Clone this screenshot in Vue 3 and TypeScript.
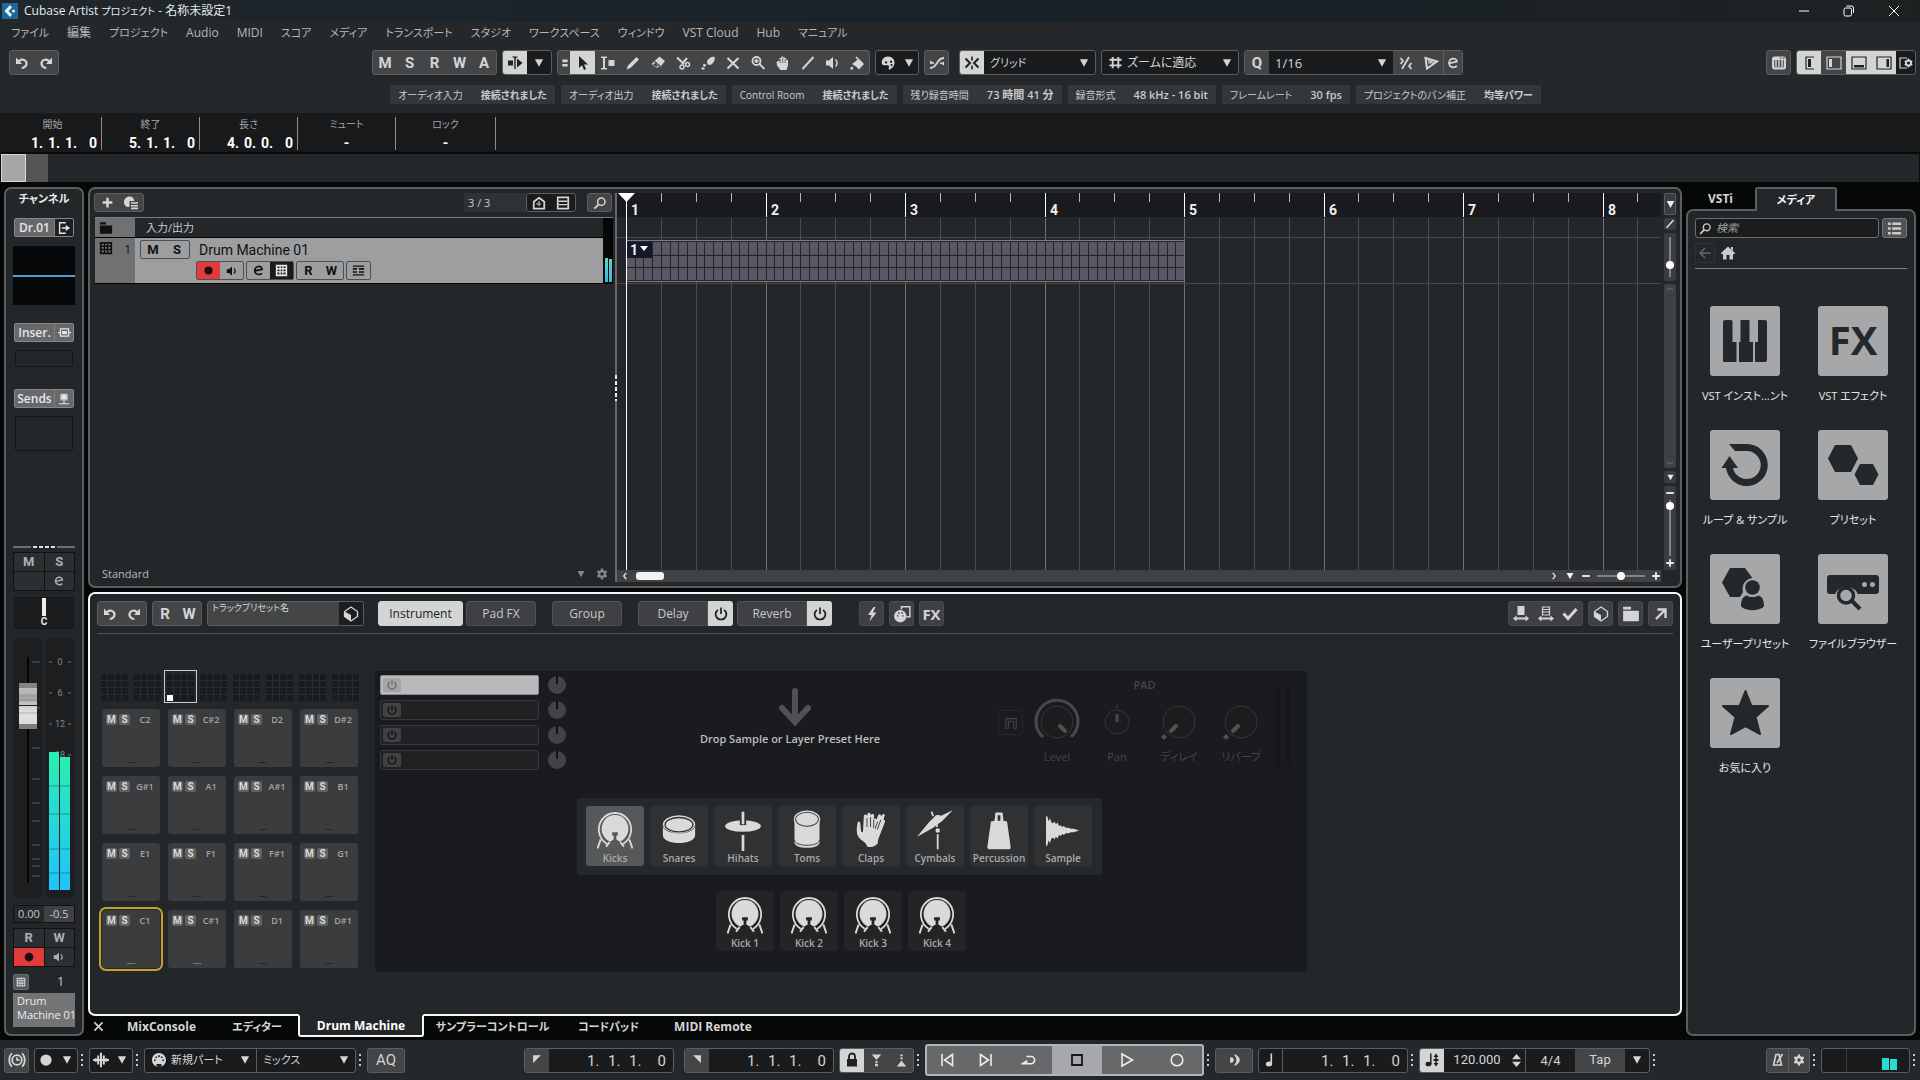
<script setup lang="ts">
import { h, ref } from 'vue'

const glyphs: Record<string, string> = {
  undo: '<path d="M2 2.500v6.500h6L5.900 6.800C7.500 5.400 10 5.600 11 7.300c1 2-.3 4.300-3.300 4.600v2.100c5-.3 7.200-4.700 5.200-8C10.900 2.900 7 2.700 4.400 5z"/>',
  redo: '<path transform="matrix(-1 0 0 1 16 0)" d="M2 2.500v6.500h6L5.900 6.800C7.500 5.400 10 5.600 11 7.300c1 2-.3 4.300-3.300 4.600v2.100c5-.3 7.200-4.700 5.200-8C10.900 2.900 7 2.700 4.400 5z"/>',
  scroll: '<path d="M1 5.500h5v5H1zM7.300 2h1.400v12H7.300zM5 1.500h6L8 4zM10 3.500 15.500 8 10 12.500z"/>',
  down: '<path d="M2.500 3h11L8 13z"/>',
  grip2: '<path d="M5 4h6v3H5zM5 9h6v3H5z"/>',
  arrow: '<path d="M4 1v12l3-2.700L9 15l2-.9-2-4.500h4z"/>',
  range: '<path d="M1 1.500h2.500l.5.500.5-.5H7V3H5v10h2v1.500H4.500L4 14l-.5.500H1V13h2V3H1zM8.500 5h6v6h-6z"/>',
  pencil: '<path d="M1.500 14.500 3 10.500 11.500 2 14 4.500 5.500 13z"/>',
  eraser: '<path d="M9.500 1.500 15 6l-5 6.500H6L1.500 9z"/><path d="m4.500 6.500 5.500 4.500-1.500 2" fill="none" stroke="#434547" stroke-width="1.300"/><path d="M3 9.500 5 8l3 2.500-2 1.500z" fill="#434547"/>',
  scissors: '<path d="M2 2.500 9 9M12 3l-5 6" fill="none" stroke="currentColor" stroke-width="2"/><circle cx="7" cy="12" r="2" fill="none" stroke="currentColor" stroke-width="1.500"/><circle cx="12.500" cy="9.500" r="2" fill="none" stroke="currentColor" stroke-width="1.500"/>',
  glue: '<path d="M7 6c2-3 5-5 7.500-4 1 3-1 6.500-4 8L7.500 9.500zM3.500 8.500 6.500 10 4.500 12 3 11zM1.500 12.500h3v2h-3z"/>',
  cross: '<path d="m2.500 3 11 10.500M13.500 3l-11 10.500" fill="none" stroke="currentColor" stroke-width="2.200"/>',
  zoom: '<circle cx="6.500" cy="6" r="4" fill="none" stroke="currentColor" stroke-width="1.800"/><path d="m9.500 9 5 5M4.500 6h4M6.500 4v4" fill="none" stroke="currentColor" stroke-width="1.800"/>',
  hand: '<path d="M3 6h1.600V3h1.600V1.500h1.700v.8h1.700V3h1.700v2H13v5.500L11.500 15h-6L2 10.500 1.500 7z"/><path d="M5.300 4v4M7.700 3v5M10.200 4v4" stroke="#434547" stroke-width=".7"/>',
  line: '<path d="M2.500 14 13.500 2" stroke="currentColor" stroke-width="2"/>',
  speaker: '<path d="M1 5.500h3L8 2v12l-4-3.500H1z"/><path d="M10.500 4.500c2 2 2 5 0 7" fill="none" stroke="currentColor" stroke-width="1.600"/>',
  bucket: '<path d="M3 9 9.500 4l5.500 5-5 5.500-3-3zM1.500 12h2.500v2.500H1.500z"/><path d="m7 2 6 6" stroke="currentColor" stroke-width="1.600"/>',
  palette: '<path fill-rule="evenodd" d="M8 1.500c4 0 6.800 3 6.500 6.500-.2 3-2.500 5.800-5 6.500-1 .3-1-1-.5-2.500.4-1.500-1-2-2.500-1.800C4 10.500 2 10.500 1.800 8 1.500 4.500 4 1.500 8 1.500zM6 6.200a1.200 1.200 0 1 0 .1 0zM11 5.500a1.200 1.200 0 1 0 .1 0zM11.500 9a1 1 0 1 0 .1 0z"/>',
  curve: '<path d="M1 13c8 0 6-10 14-10M1 7l4 1.500M15 9l-4-1" fill="none" stroke="currentColor" stroke-width="1.800"/><path d="M1 5.500v4l3-2zM15 6.500v4l-3-2z"/>',
  snap: '<path d="M7.200 1.500h1.600v4H7.200zM7.200 10.500h1.600v4H7.200z"/><path d="M1.500 3.500 6 8l-4.500 4.500M14.500 3.500 10 8l4.500 4.500" fill="none" stroke="currentColor" stroke-width="2"/>',
  hash: '<path d="M5 2v12M11 2v12M1.500 5h13M1.500 11h13" stroke="currentColor" stroke-width="2"/>',
  iq: '<path d="M4 14 11 2M2.500 3l2.500 3-2.500 3M13.500 8 11 11l2.500 3" fill="none" stroke="currentColor" stroke-width="1.800"/>',
  aq: '<path d="M2.500 3 14 6.500 4 13.500z" fill="none" stroke="currentColor" stroke-width="2"/><path d="M4.500 5h1.500v3h1.500V6H9v2h2" fill="none" stroke="currentColor" stroke-width="1.200"/>',
  edit: '<path d="M3.500 8.500 12.500 6.500C12 3.500 9.500 2.500 7.500 3 4.500 3.500 3 6.500 3.500 9c.7 4 5.500 5 9 2.500" fill="none" stroke="currentColor" stroke-width="2"/>',
  keysbtn: '<rect x="1" y="1.500" width="14" height="13" rx="2.500"/><path d="M3.200 5h9.600v7.500H3.200z" fill="#434547"/><path d="M5 5v6M8 5v6M11 5v6" stroke="currentColor" stroke-width="1.500"/><path d="M3.200 12h9.600" stroke="currentColor" stroke-width="1.200"/><path d="M9 3.200h1.500M12 3.200h1.500" stroke="#434547" stroke-width="1.200"/>',
  zl: '<path d="M13 2H5v12h8" fill="none" stroke="currentColor" stroke-width="1.200"/><path d="M7 4h3v8H7z"/>',
  zi: '<path d="M1 2h14v12H1z" fill="none" stroke="currentColor" stroke-width="1.200"/><path d="M3 4h3v8H3z"/>',
  zb: '<path d="M1 2h14v12H1z" fill="none" stroke="currentColor" stroke-width="1.200"/><path d="M3 10h10v2.500H3z"/>',
  zr: '<path d="M1 2h14v12H1z" fill="none" stroke="currentColor" stroke-width="1.200"/><path d="M10.500 4h2.500v8h-2.500z"/>',
  zset: '<path d="M9 3H2v10h7" fill="none" stroke="currentColor" stroke-width="1.200"/><circle cx="10.500" cy="8" r="2.600" fill="none" stroke="currentColor" stroke-width="2"/><path d="M10.500 3.500v2M10.500 10.500v2M6.700 6l1.500 1M12.800 9l1.500 1M6.700 10l1.500-1M12.800 7l1.500-1" stroke="currentColor" stroke-width="1.500"/>',
  gear: '<circle cx="8" cy="8" r="3.800" fill="none" stroke="currentColor" stroke-width="3"/><path d="M8 .8v3M8 12.200v3M1.800 4.400l2.600 1.500M11.600 10.100l2.600 1.500M1.800 11.600l2.600-1.500M11.600 5.900l2.600-1.500" stroke="currentColor" stroke-width="3"/>',
  plus: '<path d="M8 2v12M2 8h12" stroke="currentColor" stroke-width="3"/>',
  minus: '<path d="M2 8h12" stroke="currentColor" stroke-width="3"/>',
  preset: '<path d="M6.500 1.500c3 0 4.500 2 4.900 4.500H6.500v6C3 12.500 1 10 1 7s2.500-5.500 5.500-5.500z"/><path d="M8 8h7M8 10.700h7M8 13.400h7" stroke="currentColor" stroke-width="1.600"/>',
  vis: '<path d="M8 2 14 6.500v8H2v-8z" fill="none" stroke="currentColor" stroke-width="2"/><path d="M8 6v6M5 9h6" stroke="currentColor" stroke-width="1.500" stroke-dasharray="2 1"/>',
  rows: '<path d="M2 1.500h12v13H2z" fill="none" stroke="currentColor" stroke-width="2"/><path d="M3 6h10M3 9.800h10" stroke="currentColor" stroke-width="1.500"/>',
  search: '<circle cx="9.500" cy="6.500" r="4.200" fill="none" stroke="currentColor" stroke-width="1.700"/><path d="m6.500 9.500-5 5" stroke="currentColor" stroke-width="2.200"/>',
  folder: '<path d="M1 1.500h7V4H1zM1 5h14v9.500H1z"/>',
  grid: '<path fill-rule="evenodd" d="M1 1h14v14H1zM3 3v2h2.500V3zm4 0v2h2V3zm3.500 0v2H13V3zM3 6.800v2h2.500v-2zm4 0v2h2v-2zm3.500 0v2H13v-2zM3 10.600V13h2.500v-2.400zm4 0V13h2v-2.400zm3.500 0V13H13v-2.400z"/>',
  rec: '<circle cx="8" cy="8" r="5"/>',
  lanes: '<path d="M1 2.500h14M1 13.500h14" stroke="currentColor" stroke-width="1.500"/><path d="M1 6h5M8.500 6H15M1 9.800h5M8.500 9.800H15" stroke="currentColor" stroke-width="2"/>',
  out: '<path d="M10 2H3v12h7" fill="none" stroke="currentColor" stroke-width="1.500"/><path d="M5.500 7.200H10V4.500L15 8l-5 3.500V8.800H5.500z"/>',
  insert: '<path d="M3 3.500h10v9H3z" fill="none" stroke="currentColor" stroke-width="1.500"/><path d="M5 6h6v4H5zM0 7.300h3v1.500H0zM13 7.300h3v1.500h-3z"/>',
  send: '<path d="M3 1h10v9H3z" opacity=".7"/><path d="M5 3h6v5H5zM7.300 10h1.400v4H7.300zM1 13.500h14V15H1z"/>',
  box: '<path d="M8 1 14.500 5.500v5L8 15 1.500 10.500v-5z" fill="none" stroke="currentColor" stroke-width="1.300"/><path d="M1.500 5.500 8 9v6l-6.500-4.500z"/>',
  power: '<path d="M5 4C.5 7 3 13.500 8 13.500S15.500 7 11 4M8 1.500V8" fill="none" stroke="currentColor" stroke-width="1.700"/>',
  bolt: '<path d="M9.500 1 4 9h3.500L5.500 15.500 12.500 6.500H8.800L11.500 1z"/>',
  midi: '<path d="M7.500 4V1.500h7.500v9h-3" fill="none" stroke="currentColor" stroke-width="1.300"/><path fill-rule="evenodd" d="M6.500 4.500a5.500 5.500 0 1 1-.1 0zM3.500 9v1.300h1.300V9zm4.600 0v1.300h1.300V9zM4.500 6.500v1.300h1.300V6.500zm3 0v1.300h1.300V6.500z"/>',
  din: '<path fill-rule="evenodd" d="M8 1a7 7 0 1 1-.1 0zM3 7.500V9h1.600V7.500zm8.400 0V9H13V7.500zM4.500 4.500v1.600h1.600V4.500zm5.400 0v1.600h1.600V4.500zM7.200 3.300v1.600h1.600V3.300zM5.500 12v3h5v-3z"/>',
  dsolid: '<path d="M4.500 0h7v9h-7zM0 12.500 3.500 9.500v2h9v-2L16 12.500l-3.500 3v-2h-9v2z"/>',
  dlines: '<path d="M4.500 1h7v8h-7zM5 3.500h6M5 6h6" fill="none" stroke="currentColor" stroke-width="1.200"/><path d="M0 12.500 3.500 9.500v2h9v-2L16 12.500l-3.500 3v-2h-9v2z"/>',
  check: '<path d="m1.500 7.500 4.500 5 8.500-9.500" fill="none" stroke="currentColor" stroke-width="3"/>',
  ne: '<path d="M4.500 3.500h8v8.500M12 4l-9 9" fill="none" stroke="currentColor" stroke-width="2.400"/>',
  close: '<path d="m3 3 10 10M13 3 3 13" stroke="currentColor" stroke-width="2"/>',
  home: '<path d="M8 1.500 15 8v1h-2v5.500H9.500V10h-3v4.500H3V9H1V8z"/><path d="M11 2h2v4l-2-2z"/>',
  back: '<path d="M14.500 8H3M8 2.500 2.500 8 8 13.500" fill="none" stroke="currentColor" stroke-width="2"/>',
  list: '<path d="M1 3h3M1 8h3M1 13h3M5.500 3H15M5.500 8H15M5.500 13H15" stroke="currentColor" stroke-width="2.600"/>',
  clock: '<circle cx="8" cy="8" r="4.300" fill="none" stroke="currentColor" stroke-width="1.600"/><path d="M8 5.500V8h2.500M3.500 2C.3 5 .3 11 3.500 14M12.500 2c3.200 3 3.200 9 0 12" fill="none" stroke="currentColor" stroke-width="1.500"/>',
  wave: '<path d="M1 8h14M3.300 6.500v3M5.500 4v8M8 1.500v13M10.500 4v8M12.700 6.500v3" stroke="currentColor" stroke-width="1.800"/>',
  locl: '<path d="M3.500 2.500h9l-9 9z"/>',
  locr: '<path d="M12.500 2.500h-9l9 9z"/>',
  lock: '<path d="M5 7V4.500a3 3 0 0 1 6 0V7" fill="none" stroke="currentColor" stroke-width="1.800"/><path d="M3 7h10v7.500H3z"/>',
  punchi: '<path d="M3 1.500h10L8 7.500zM6.800 8.500h2.400v2H6.800zM6.500 11.500h3v2.500h-3z"/>',
  puncho: '<path d="M3 14.500h10L8 8zM6.800 1.500h2.400v2H6.800zM6.800 4.700h2.400v2H6.800z"/>',
  prev: '<path d="M3 2v12M13.500 2.500 5.500 8l8 5.500z" fill="none" stroke="currentColor" stroke-width="1.600"/>',
  next: '<path d="M13 2v12M2.500 2.500l8 5.500-8 5.500z" fill="none" stroke="currentColor" stroke-width="1.600"/>',
  cycle: '<path d="M5.500 4.500H10a3.600 3.600 0 0 1 0 7.200H1.500l4-2.500v2.500" fill="none" stroke="currentColor" stroke-width="1.600"/>',
  stop: '<path d="M3 3h10v10H3z" fill="none" stroke="currentColor" stroke-width="1.800"/>',
  play: '<path d="M3 2 13.500 8 3 14z" fill="none" stroke="currentColor" stroke-width="1.600"/>',
  record: '<circle cx="8" cy="8" r="5.800" fill="none" stroke="currentColor" stroke-width="1.600"/>',
  preroll: '<path d="M3.500 5a3.200 3.200 0 1 1 0 6z"/><path d="M8.500 2c7.500 1.500 7.500 10.500 0 12 3.500-3 3.500-9 0-12z" stroke="currentColor"/>',
  note: '<ellipse cx="6" cy="12" rx="3.200" ry="2.500"/><path d="M8.300 1.500v10.500" stroke="currentColor" stroke-width="1.600"/>',
  tempo: '<ellipse cx="4.500" cy="12" rx="3" ry="2.300"/><path d="M6.800 1.500v10.500M12 3v10" stroke="currentColor" stroke-width="1.500"/><path d="M9.500 5 12 1.500 14.500 5zM9.500 11l2.500 3.500 2.500-3.500zM9.500 7h5v2h-5z"/>',
  metro: '<path d="M6 2.500h3L11.500 13h-8z" fill="none" stroke="currentColor" stroke-width="1.600"/><path d="m7 11 5.500-9" stroke="currentColor" stroke-width="1.600"/>',
  up: '<path d="M8 0 13.500 6.500h-11zM2.500 9.500h11L8 16z"/>',
  ramp: '<path d="M2 14V3h12v11h-3V6H5v8z" fill="none" stroke="currentColor" stroke-width="1.200"/>',
  chevl: '<path d="M10 3 6 8l4 5" fill="none" stroke="currentColor" stroke-width="2"/>',
  chevr: '<path d="m6 3 4 5-4 5" fill="none" stroke="currentColor" stroke-width="2"/>',
  chevu: '<path d="m3 10 5-4 5 4" fill="none" stroke="currentColor" stroke-width="1.500"/>',
  chevd: '<path d="m3 6 5 4 5-4" fill="none" stroke="currentColor" stroke-width="1.500"/>',
}

const kick =
  '<path d="M11 39A18 18.500 0 1 1 29 39" fill="none" stroke="currentColor" stroke-width="2"/><path d="M14.500 36.500A15 15.500 0 1 1 25.500 36.500L21.500 34v-4.500h1.700V26h-6.400v3.500h1.700V34z"/><path d="m4 34-3.500 10M36 34l3.500 10M14 37l-4 5M26 37l4 5" stroke="currentColor" stroke-width="2.200"/>'

const drums: Record<string, string> = {
  kick,
  snare: '<path d="M2 18v11c0 12 36 12 36 0V18c0 12-36 12-36 0z"/><ellipse cx="20" cy="17" rx="18" ry="10"/><ellipse cx="20" cy="17.500" rx="15.500" ry="8" fill="#d9dadb" stroke="#2f3133" stroke-width="1.500"/>',
  hihat: '<ellipse cx="20" cy="19" rx="20" ry="6.500"/><path d="M16.500 12h7v6h-7z" fill="#2f3133"/><path d="M18.500 3h3v14h-3zM18.500 29h3v18h-3z"/>',
  tom: '<path d="M6 13v24c0 8.500 28 8.500 28 0V13z"/><ellipse cx="20" cy="11.500" rx="13" ry="8" fill="#d9dadb" stroke="#2f3133" stroke-width="1.500"/><ellipse cx="20" cy="11.500" rx="14" ry="9" fill="none" stroke="currentColor" stroke-width="1.500"/><path d="M6 34.500c0 8 28 8 28 0" fill="none" stroke="#2f3133"/>',
  clap: '<path d="M5 15c1-2 3-1 3 1l1 9 2 1 1-18c0-2.500 3.500-2.500 3.500 0L16 6c0-2.500 3.500-2.500 3.500 0l.5 1c.500-2 3.500-2 3.500.5l-.5 4c1-1.500 3-1 3 .5l2-5c1-2 3.500-1 3 1l2-2c2-1 3 0 2 2l-1 4c1.500 0 2 1 1.500 2.500l-5 13c-1 3-3 6-3 11-4 4-8 5-12 3-1-6-9-6-11-14-1-5 0-9 .5-12z"/><path d="M15.500 10v10M19.500 9v11M23 12v9M27.500 14l-3 8M31 12l-4 11" stroke="#2f3133"/>',
  cymbal: '<path d="M0 31 13 15l7-7c2-2 5-1 7-.5L40 1 28 13.500 18 21z"/><path d="M22 14v6M16 3l2 5" stroke="currentColor" stroke-width="2"/><circle cx="23" cy="24" r="2.500"/><path d="M22 28h2v17h-2z"/>',
  bell: '<path fill-rule="evenodd" d="M16 4h8l1 9 4 1 4 28c0 2-1 3-2 3H9c-1 0-2-1-2-3l4-28 4-1zm2.500 3v6h3V7z"/>',
  sample: '<path d="M1 8h1.500l1.500 6 1.500-4 1.500 5 2 1 1.500-2 1.500 3 2-2 1.500 4 2-1 1.500 2 2-1 2 2 3 0 3 1 3 0 6 2-6 2-3 0-3 1-3 0-2 2-2-1-1.500 2-2-1-1.500 4-2-2-1.500 3-1.500-2-2 1-1.500 5-1.500-3-1.500 6H1z"/>',
}

const tiles: Record<string, string> = {
  keys: '<path d="M15 14h6q1.500 0 1.500 1.500V36h4v19q0 1-1 1H14q-1 0-1-1V16q0-2 2-2zM31.500 14h7q1 0 1 1v21H43v20H29V36h1.500V15q0-1 1-1zM49 14h6q2 0 2 2v38q0 2-2 2H46q-1 0-1-1V36h3V15q0-1 1-1z"/>',
  loop: '<path d="M19 14h18a21 21 0 1 1-21 24h-4.500L19.500 26 28 38h-5A14 14 0 1 0 37 21H25z"/>',
  preset: '<path d="M17 15h16l7 13.500L33 42H17l-7-13.500zM42 34h13l5.500 10.500L55 55H42l-5.500-10.500z"/>',
  user: '<path d="M20 14h15l7.500 10A11 11 0 0 0 33 38l-3 5H20L12 28.500z"/><circle cx="42.500" cy="33.500" r="7.300"/><path d="M37 41.500c3 2 8 2 11 0 5 1 6 6 6 11-6 5-17 5-23 0 0-5 1-10 6-11z"/>',
  files: '<path d="M12 21h46q3 0 3 3v13q0 3-3 3H40A13 13 0 0 0 17 40h-5q-3 0-3-3V24q0-3 3-3z"/><circle cx="46.500" cy="30.500" r="2.500" fill="#a6a7a8"/><circle cx="54.500" cy="30.500" r="2.500" fill="#a6a7a8"/><circle cx="28" cy="41.500" r="7.500" fill="none" stroke="currentColor" stroke-width="3.500"/><path d="m33.500 46.500 8.500 8.500" stroke="currentColor" stroke-width="4"/>',
  star: '<path d="m35.500 13 6 15H58l-12.500 11L50 56l-14.500-8L21 56l4.500-17L13 28h16.500z" stroke="currentColor" stroke-width="2" stroke-linejoin="round"/>',
}

const Ic = (p: { n: string; s?: number }) =>
  h('svg', { class: 'ic', viewBox: '0 0 16 16', width: p.s ?? 16, height: p.s ?? 16, fill: 'currentColor', 'aria-hidden': 'true', innerHTML: glyphs[p.n] })
Ic.props = ['n', 's']

const isJa = (t: string) => /[\u3040-\u30ff]/.test(t)

const menus = ['ファイル', '編集', 'プロジェクト', 'Audio', 'MIDI', 'スコア', 'メディア', 'トランスポート', 'スタジオ', 'ワークスペース', 'ウィンドウ', 'VST Cloud', 'Hub', 'マニュアル']
const tools = ['arrow', 'range', 'pencil', 'eraser', 'scissors', 'glue', 'cross', 'zoom', 'hand', 'line', 'speaker', 'bucket']
const status = [
  ['オーディオ入力', '接続されました'], ['オーディオ出力', '接続されました'], ['Control Room', '接続されました'],
  ['残り録音時間', '73 時間 41 分'], ['録音形式', '48 kHz - 16 bit'], ['フレームレート', '30 fps'], ['プロジェクトのパン補正', '均等パワー'],
]
const info: { label: string; pos?: string[] }[] = [
  { label: '開始', pos: ['1.', '1.', '1.', '0'] }, { label: '終了', pos: ['5.', '1.', '1.', '0'] },
  { label: '長さ', pos: ['4.', '0.', '0.', '0'] }, { label: 'ミュート' }, { label: 'ロック' },
]
const zero = ['1.', '1.', '1.', '0']

const BAR = 139.5
const ORIGIN = 9
const bars = Array.from({ length: 8 }, (_, i) => ({ n: i + 1, x: Math.round(ORIGIN + i * BAR) }))
const beats = Array.from({ length: 31 }, (_, i) => i).filter((i) => i % 4).map((i) => Math.round(ORIGIN + (i * BAR) / 4))
const steps = Array.from({ length: 63 }, (_, i) => Math.round(ORIGIN + ((i + 1) * BAR) / 16))

const pads = ['C2', 'C#2', 'D2', 'D#2', 'G#1', 'A1', 'A#1', 'B1', 'E1', 'F1', 'F#1', 'G1', 'C1', 'C#1', 'D1', 'D#1']
const selectedPad = ref('C1')
const cats = [['kick', 'Kicks'], ['snare', 'Snares'], ['hihat', 'Hihats'], ['tom', 'Toms'], ['clap', 'Claps'], ['cymbal', 'Cymbals'], ['bell', 'Percussion'], ['sample', 'Sample']]
const kicks = ['Kick 1', 'Kick 2', 'Kick 3', 'Kick 4']
const category = ref('Kicks')
const media = [['keys', 'VST インスト...ント'], ['fx', 'VST エフェクト'], ['loop', 'ループ & サンプル'], ['preset', 'プリセット'], ['user', 'ユーザープリセット'], ['files', 'ファイルブラウザー'], ['star', 'お気に入り']]
const lowerTabs = ['MixConsole', 'エディター', 'Drum Machine', 'サンプラーコントロール', 'コードパッド', 'MIDI Remote']
const faderTicks = [24, 70, 110, 141, 165, 183, 207, 221, 228, 238]
const meterMarks = [[24, '0'], [55, '6'], [86, '12'], [117, '18']] as [number, string][]
</script>

<template>
  <div class="app">
    <header class="top">
      <div class="title">
        <svg class="logo" viewBox="0 0 16 16" width="16" height="16"><path d="M0 0h16v16H0z" fill="#1c6a9c" /><path d="M8 2 2.500 8 8 14l2-2.500L6.500 8 10 4.500z" fill="#e8f4fb" /><circle cx="11.500" cy="8" r="1.500" fill="#e8f4fb" /></svg>
        <h1>Cubase Artist <span class="k10">プロジェクト</span> - 名称未設定1</h1>
        <div class="winbtns">
          <button aria-label="最小化"><svg viewBox="0 0 12 12" width="12" height="12"><path d="M1 6h10" stroke="#fff" /></svg></button>
          <button aria-label="元に戻す"><svg viewBox="0 0 12 12" width="12" height="12" fill="none" stroke="#fff"><rect x="1" y="3" width="7.500" height="8" rx="1.500" /><path d="M3.500 1h5q2 0 2 2v5" /></svg></button>
          <button aria-label="閉じる"><svg viewBox="0 0 12 12" width="12" height="12"><path d="m1 1 10 10M11 1 1 11" stroke="#fff" /></svg></button>
        </div>
      </div>
      <nav class="menu"><button v-for="m in menus" :key="m" :class="{ k11: isJa(m) }">{{ m }}</button></nav>

      <div class="toolbar">
        <div class="grp"><button class="b" aria-label="Undo"><Ic n="undo" /></button><button class="b" aria-label="Redo"><Ic n="redo" /></button></div>
        <div class="tools">
          <div class="grp ltr"><button v-for="l in 'MSRWA'" :key="l" class="b">{{ l }}</button></div>
          <div class="grp dark"><button class="b on" aria-label="オートスクロール"><Ic n="scroll" /></button><button class="b" aria-label="オートスクロール設定"><Ic n="down" s="12" /></button></div>
          <div class="grp">
            <span class="handle"><Ic n="grip2" s="14" /></span>
            <button v-for="(t, i) in tools" :key="t" class="b" :class="{ on: i === 0 }" :aria-label="t"><Ic :n="t" /></button>
          </div>
          <div class="grp dark"><button class="b" aria-label="カラー"><Ic n="palette" /></button><button class="b slim" aria-label="カラーメニュー"><Ic n="down" s="12" /></button></div>
          <div class="grp"><button class="b" aria-label="クロスフェード"><Ic n="curve" /></button></div>
          <div class="grp dark apart">
            <button class="b on" aria-label="スナップ"><Ic n="snap" /></button>
            <label class="sel w110"><select class="k11" aria-label="スナップタイプ"><option>グリッド</option></select><Ic n="down" s="12" /></label>
          </div>
          <div class="grp dark">
            <label class="sel w136"><Ic n="hash" s="15" /><select aria-label="グリッドの間隔"><option>ズームに適応</option></select><Ic n="down" s="12" /></label>
          </div>
          <div class="grp dark">
            <span class="b mid qletter">Q</span>
            <label class="sel w124"><select class="k13" aria-label="クオンタイズ"><option>1/16</option></select><Ic n="down" s="12" /></label>
            <button class="b mid" aria-label="反復クオンタイズ"><Ic n="iq" /></button><button class="b mid" aria-label="オーディオクオンタイズ"><Ic n="aq" /></button>
            <button class="b mid slim2" aria-label="クオンタイズパネル"><Ic n="edit" s="14" /></button>
          </div>
        </div>
        <div class="zones">
          <div class="grp"><button class="b" aria-label="オンスクリーンキーボード"><Ic n="keysbtn" /></button></div>
          <div class="grp dark">
            <button class="b on" aria-label="左ゾーン"><Ic n="zl" /></button><button class="b mid" aria-label="インスペクター"><Ic n="zi" /></button>
            <button class="b on" aria-label="下ゾーン"><Ic n="zb" /></button><button class="b on" aria-label="右ゾーン"><Ic n="zr" /></button>
            <button class="b slim2" aria-label="ゾーン設定"><Ic n="zset" /></button>
          </div>
        </div>
      </div>

      <dl class="status">
        <div v-for="s in status" :key="s[0]"><dt>{{ s[0] }}</dt><dd :class="{ k10: isJa(s[1]) }">{{ s[1] }}</dd></div>
      </dl>
    </header>

    <section class="info">
      <div v-for="c in info" :key="c.label" class="icol">
        <span>{{ c.label }}</span>
        <b v-if="c.pos" class="pos small"><i v-for="(p, i) in c.pos" :key="i">{{ p }}</i></b>
        <b v-else>-</b>
      </div>
    </section>
    <div class="overview"><i class="view"></i><i class="rest"></i></div>

    <main class="main">
      <aside class="panel channel">
        <h2>チャンネル</h2>
        <div class="chrow first"><button class="name">Dr.01</button><button class="sq line" aria-label="出力"><Ic n="out" s="14" /></button></div>
        <div class="eq"></div>
        <div class="chrow mt18"><button class="name">Inser.</button><button class="sq" aria-label="Inserts"><Ic n="insert" s="13" /></button></div>
        <div class="slot s1"></div>
        <div class="chrow mt22"><button class="name">Sends</button><button class="sq" aria-label="Sends bypass"><Ic n="send" s="12" /></button></div>
        <div class="slot s2"></div>
        <div class="split"></div>
        <div class="four"><button>M</button><button>S</button><button aria-label="Listen"></button><button aria-label="Edit"><Ic n="edit" s="12" /></button></div>
        <div class="pan"><i></i><span>C</span></div>
        <div class="fader">
          <div class="fcol">
            <svg width="28" height="260" aria-hidden="true"><path d="M14 19v226" stroke="#050505" stroke-width="2" /><path v-for="t in faderTicks" :key="t" :d="`M18 ${t}h8`" stroke="#5d5f60" /></svg>
            <input type="range" min="0" max="100" value="79" aria-label="Level" />
          </div>
          <svg class="meter" width="28" height="260" aria-hidden="true">
            <defs><linearGradient id="mg" x1="0" y1="0" x2="0" y2="1"><stop offset="0" stop-color="#2bedb3" /><stop offset="1" stop-color="#1ec3fb" /></linearGradient></defs>
            <g v-for="m in meterMarks" :key="m[0]"><text x="14" :y="m[0] + 3" text-anchor="middle">{{ m[1] }}</text><path :d="`M3 ${m[0]}h3M22 ${m[0]}h3`" stroke="#777" /></g>
            <rect x="3" y="114" width="10" height="138" fill="url(#mg)" /><rect x="14" y="119" width="10" height="133" fill="url(#mg)" />
            <path d="M3 148h21M3 176h21M3 211h21M3 235h21" stroke="#12696f" stroke-opacity=".6" />
          </svg>
        </div>
        <div class="vals"><span>0.00</span><span class="lit">-0.5</span></div>
        <div class="four"><button>R</button><button>W</button><button class="red" aria-label="録音"><Ic n="rec" s="14" /></button><button aria-label="モニター"><Ic n="speaker" s="12" /></button></div>
        <div class="trk"><span class="tico"><Ic n="grid" s="10" /></span><span>1</span></div>
        <div class="tname">Drum<br />Machine 01</div>
      </aside>

      <div class="center">
        <section class="panel project">
          <div class="tracks">
            <div class="thead">
              <div class="grp h19"><button class="b" aria-label="トラックを追加"><Ic n="plus" s="13" /></button><button class="b" aria-label="トラックプリセット"><Ic n="preset" /></button></div>
              <span class="count">3 / 3</span>
              <div class="grp h19 dark"><button class="b" aria-label="表示"><Ic n="vis" s="14" /></button><button class="b" aria-label="リスト"><Ic n="rows" s="14" /></button></div>
              <div class="grp h19 find"><button class="b" aria-label="検索"><Ic n="search" s="14" /></button></div>
            </div>
            <div class="tlist">
              <div class="rows">
                <div class="row io"><div class="hd"><Ic n="folder" s="14" /></div><div class="bd">入力/出力</div></div>
                <div class="row drum">
                  <div class="hd"><Ic n="grid" s="14" /><span>1</span></div>
                  <div class="bd">
                    <div class="l1"><div class="tg"><button>M</button><button>S</button></div><span>Drum Machine 01</span></div>
                    <div class="l2">
                      <div class="tg"><button class="red" aria-label="録音可能"><Ic n="rec" s="13" /></button><button aria-label="モニター"><Ic n="speaker" s="12" /></button></div>
                      <div class="tg"><button aria-label="編集"><Ic n="edit" s="13" /></button><button class="blk" aria-label="Drum Machine"><Ic n="grid" s="13" /></button></div>
                      <div class="tg"><button>R</button><button>W</button></div>
                      <div class="tg"><button aria-label="レーン"><Ic n="lanes" s="13" /></button></div>
                    </div>
                  </div>
                </div>
              </div>
              <div class="tmeter"><i></i><i></i></div>
            </div>
            <div class="tfoot"><span>Standard</span><Ic n="down" s="10" /><Ic n="gear" s="12" /></div>
          </div>
          <div class="vsplit"><i></i></div>
          <div class="timeline">
            <svg class="arr" aria-label="タイムライン">
              <rect x="0" y="0" width="100%" height="24" fill="#1a1b1e" />
              <path v-for="x in beats" :key="x" :d="`M${x + 0.5} 25V800`" stroke="#4b4e50" />
              <path v-for="b in bars" :key="b.n" :d="`M${b.x + 0.5} 25V800`" stroke="#717375" />
              <path v-for="x in beats" :key="'t' + x" :d="`M${x + 0.5} 0v9`" stroke="#b5b6b7" />
              <g v-for="b in bars" :key="'b' + b.n"><path :d="`M${b.x + 0.5} 0v24`" stroke="#fff" /><text :x="b.x + 5" y="22">{{ b.n }}</text></g>
              <path d="M0 44.500H1048M0 90.500H1048" stroke="#47494b" />
              <rect x="0" y="46" width="9" height="42" fill="#25242c" />
              <rect x="10" y="47" width="557" height="42" fill="#7a7a83" /><rect x="10" y="49" width="557" height="38" fill="#585762" />
              <path v-for="x in steps" :key="'s' + x" :d="`M${x + 0.5} 49v38`" stroke="#24242f" />
              <path d="M10 62.500h557M10 74.500h557M10 87.500h557M10 48.500h557" stroke="#24242f" />
              <rect x="10" y="49" width="25" height="16" fill="#17172b" /><text x="13" y="62">1</text><path d="M23 53h8l-4 5z" fill="#fff" />
              <path d="M9.500 0v800" stroke="#fff" /><path d="M1 0h17l-8.500 9z" fill="#fff" />
            </svg>
            <div class="hscroll">
              <Ic n="chevl" s="10" /><i class="thumb"></i><span class="grow"></span><Ic n="chevr" s="10" /><Ic n="down" s="10" /><Ic n="minus" s="10" />
              <input type="range" value="50" aria-label="横ズーム" /><Ic n="plus" s="10" />
            </div>
          </div>
          <div class="vside">
            <button class="v21" aria-label="ルーラー"><Ic n="down" s="11" /></button>
            <button class="v12" aria-label="編集"><Ic n="line" s="10" /></button>
            <div class="vs v48"><input type="range" value="24" aria-label="波形ズーム" /></div>
            <div class="vbar"><Ic n="chevu" s="10" /><Ic n="chevd" s="10" /></div>
            <button class="v12" aria-label="表示"><Ic n="down" s="9" /></button>
            <div class="vs v84"><Ic n="minus" s="10" /><input type="range" value="96" aria-label="縦ズーム" /><Ic n="plus" s="10" /></div>
          </div>
        </section>

        <section class="lower">
          <div class="lbar">
            <div class="grp"><button class="b" aria-label="Undo"><Ic n="undo" /></button><button class="b" aria-label="Redo"><Ic n="redo" /></button></div>
            <div class="grp ltr"><button class="b">R</button><button class="b">W</button></div>
            <div class="grp psel"><span>トラックプリセット名</span><button class="b drk" aria-label="プリセット"><Ic n="box" /></button></div>
            <div class="modes">
              <button class="tb w85 sel-on">Instrument</button><button class="tb">Pad FX</button>
              <button class="tb ml">Group</button>
              <div class="fxb ml"><button class="tb">Delay</button><button class="pw" aria-label="Delay on"><Ic n="power" /></button></div>
              <div class="fxb"><button class="tb">Reverb</button><button class="pw" aria-label="Reverb on"><Ic n="power" /></button></div>
            </div>
            <div class="grp soft"><button class="b" aria-label="クイック"><Ic n="bolt" /></button></div>
            <div class="grp soft"><button class="b" aria-label="MIDI"><Ic n="midi" s="18" /></button></div>
            <div class="grp soft"><button class="b fxl">FX</button></div>
            <div class="grp soft push"><button class="b" aria-label="置き換え"><Ic n="dsolid" /></button><button class="b" aria-label="追加"><Ic n="dlines" /></button><button class="b" aria-label="適用"><Ic n="check" /></button></div>
            <div class="grp soft"><button class="b" aria-label="プリセット"><Ic n="box" /></button></div>
            <div class="grp soft"><button class="b" aria-label="ブラウザー"><Ic n="folder" s="18" /></button></div>
            <div class="grp soft"><button class="b" aria-label="別ウィンドウ"><Ic n="ne" /></button></div>
          </div>

          <div class="kit">
            <div class="padzone">
              <div class="banks"><div v-for="i in 8" :key="i" class="bank" :class="{ cur: i === 3 }"><i></i></div></div>
              <div class="pads">
                <div v-for="p in pads" :key="p" class="pad" :class="{ cur: p === selectedPad }" @click="selectedPad = p">
                  <div class="ph"><button>M</button><button>S</button><span>{{ p }}</span></div><em :class="{ lt: p === 'C1' || p === 'C#1' }">---</em>
                </div>
              </div>
            </div>
            <div class="inst">
              <div class="layers">
                <div v-for="i in 4" :key="i" class="layer">
                  <div class="lslot" :class="{ cur: i === 1 }"><button aria-label="レイヤー"><Ic n="power" s="12" /></button></div>
                  <svg width="20" height="20" viewBox="0 0 20 20"><circle cx="10" cy="10" r="9" fill="#414345" /><path d="M10 1v8" stroke="#111" stroke-width="2" /></svg>
                </div>
              </div>
              <div class="stage">
                <div class="srow">
                  <div class="drop">
                    <svg width="34" height="38" viewBox="0 0 34 38" fill="none" stroke="#505153" stroke-width="6" stroke-linecap="round"><path d="M17 3v28M4 20l13 14L30 20" /></svg>
                    <p>Drop Sample or Layer Preset Here</p>
                  </div>
                  <div class="padctl">
                    <h3>PAD</h3>
                    <div class="knobs">
                      <button class="rampb" aria-label="ワンショット"><Ic n="ramp" s="14" /></button>
                      <div class="knob"><svg viewBox="0 0 60 54" width="60" height="54"><path d="M16 42A21 21 0 1 1 44 42" fill="none" stroke="#48494b" stroke-width="3" /><circle cx="30" cy="27" r="16" fill="#1b1c1d" stroke="#343638" /><path d="m33 31 5 5" stroke="#505153" stroke-width="4" stroke-linecap="round" /></svg><span>Level</span></div>
                      <div class="knob"><svg viewBox="0 0 60 54" width="60" height="54"><circle cx="30" cy="27" r="12" fill="#1b1c1d" stroke="#343638" /><path d="M30 19v8" stroke="#48494b" stroke-width="3" /><path d="M30 10v3" stroke="#48494b" /></svg><span>Pan</span></div>
                      <div v-for="k in ['ディレイ', 'リバーブ']" :key="k" class="knob send"><svg viewBox="0 0 60 54" width="60" height="54"><circle cx="30" cy="27" r="16" fill="#1b1c1d" stroke="#343638" /><path d="m27 31-5 5" stroke="#505153" stroke-width="4" stroke-linecap="round" /><path d="m15 39 3 3-3 3-3-3z" fill="#505153" /></svg><span>{{ k }}</span></div>
                      <i class="vm"></i><i class="vm"></i>
                    </div>
                  </div>
                </div>
                <div class="cats">
                  <button v-for="c in cats" :key="c[1]" class="cat" :class="{ cur: c[1] === category }" @click="category = c[1]">
                    <svg viewBox="0 0 40 48" width="36" height="43" fill="currentColor" v-html="drums[c[0]]"></svg><span>{{ c[1] }}</span>
                  </button>
                </div>
                <div class="subs">
                  <button v-for="k in kicks" :key="k" class="cat"><svg viewBox="0 0 40 48" width="36" height="43" fill="currentColor" v-html="kick"></svg><span>{{ k }}</span></button>
                </div>
              </div>
            </div>
          </div>
        </section>
        <nav class="ltabs">
          <button class="x" aria-label="閉じる"><Ic n="close" s="13" /></button>
          <button v-for="(t, i) in lowerTabs" :key="t" :class="['t' + i, { cur: i === 2, k11: isJa(t) }]">{{ t }}</button>
        </nav>
      </div>

      <aside class="right">
        <nav class="rtabs"><button>VSTi</button><button class="cur k11">メディア</button></nav>
        <div class="panel rpanel">
          <div class="sline">
            <label class="sbox"><Ic n="search" s="13" /><input type="search" placeholder="検索" aria-label="検索" /></label>
            <button class="lbtn" aria-label="結果"><Ic n="list" s="15" /></button>
          </div>
          <div class="nline"><button class="bk" aria-label="戻る"><Ic n="back" s="14" /></button><button aria-label="ホーム"><Ic n="home" s="16" /></button></div>
          <div class="tiles">
            <button v-for="m in media" :key="m[0]" class="tile">
              <span v-if="m[0] === 'fx'" class="tpic fx">FX</span>
              <svg v-else class="tpic" viewBox="0 0 70 70" fill="currentColor" v-html="tiles[m[0]]"></svg>
              <span class="tl">{{ m[1] }}</span>
            </button>
          </div>
        </div>
      </aside>
    </main>

    <footer class="transport">
      <div class="cl">
        <div class="grp"><button class="b w23" aria-label="遅延補正"><Ic n="clock" s="18" /></button></div>
        <div class="grp dark"><button class="b w21" aria-label="録音モード"><Ic n="rec" s="18" /></button><button class="b w21" aria-label="録音モードメニュー"><Ic n="down" s="12" /></button></div><i class="dots"></i>
        <div class="grp dark"><button class="b w21" aria-label="オーディオ録音モード"><Ic n="wave" s="18" /></button><button class="b w21" aria-label="オーディオ録音メニュー"><Ic n="down" s="12" /></button></div><i class="dots"></i>
        <div class="grp dark">
          <label class="sel w111"><Ic n="din" /><select class="k11" aria-label="MIDI 録音モード"><option>新規パート</option></select><Ic n="down" s="12" /></label>
          <label class="sel w99 bl"><select class="k11" aria-label="サイクル録音モード"><option>ミックス</option></select><Ic n="down" s="12" /></label>
        </div><i class="dots"></i>
        <div class="grp"><button class="b w36 thin">AQ</button></div>
      </div>
      <div class="cl mid-cl">
        <div class="grp dark"><button class="b mid" aria-label="左ロケーター"><Ic n="locl" s="14" /></button><span class="pos big w124"><i v-for="(p, i) in zero" :key="i">{{ p }}</i></span></div>
        <i class="gap"></i>
        <div class="grp dark"><button class="b mid" aria-label="右ロケーター"><Ic n="locr" s="14" /></button><span class="pos big w124"><i v-for="(p, i) in zero" :key="i">{{ p }}</i></span></div>
        <div class="grp"><button class="b on" aria-label="パンチロック"><Ic n="lock" /></button><button class="b" aria-label="パンチイン"><Ic n="punchi" s="15" /></button><button class="b" aria-label="パンチアウト"><Ic n="puncho" s="15" /></button></div><i class="dots"></i>
        <div class="play">
          <button class="p1" aria-label="前へ"><Ic n="prev" /></button><button class="p1" aria-label="次へ"><Ic n="next" /></button><button class="p2" aria-label="サイクル"><Ic n="cycle" /></button>
          <button class="p3 act" aria-label="停止"><Ic n="stop" /></button><button class="p3" aria-label="再生"><Ic n="play" /></button><button class="p3" aria-label="録音"><Ic n="record" /></button>
        </div><i class="dots"></i>
        <div class="grp"><button class="b w36" aria-label="プリロール"><Ic n="preroll" s="14" /></button></div>
        <div class="grp dark"><button class="b br" aria-label="表示形式"><Ic n="note" /></button><span class="pos big w124"><i v-for="(p, i) in zero" :key="i">{{ p }}</i></span></div><i class="dots"></i>
        <div class="grp dark tempo">
          <button class="b on" aria-label="テンポトラック"><Ic n="tempo" /></button>
          <span class="tv">120.000</span><Ic n="up" s="13" /><span class="ts">4/4</span><button class="b mid tap">Tap</button><button class="b" aria-label="テンポメニュー"><Ic n="down" s="12" /></button>
        </div><i class="dots"></i>
      </div>
      <div class="cl">
        <div class="grp"><button class="b w21" aria-label="メトロノーム"><Ic n="metro" /></button><button class="b w21 bl" aria-label="メトロノーム設定"><Ic n="gear" s="12" /></button></div><i class="dots"></i>
        <div class="grp dark out"><span class="o1"></span><span class="o2"><i></i><i></i></span></div><i class="dots"></i>
      </div>
    </footer>
  </div>
</template>

<style>
body { margin: 0; background: #050606; }
</style>

<style scoped>
* { box-sizing: border-box; }
.app { display: flex; flex-direction: column; min-height: 100vh; background: #060707; color: #c9cacb; font: 12px/16px "Open Sans", "Noto Sans CJK JP", sans-serif; font-feature-settings: "palt"; }
button, select, input { font: inherit; color: inherit; background: none; border: 0; padding: 0; margin: 0; font-feature-settings: inherit; }
h1, h2, h3, p, dl, dd { margin: 0; font-size: 12px; font-weight: 400; }
i, em { font-style: normal; }
.ic { flex: none; display: block; }

.top { background: #25282b; height: 113px; display: flex; flex-direction: column; }
.title { display: flex; align-items: center; height: 22px; padding: 0 4px 0 2px; background: linear-gradient(90deg, #20272c, #18222a 50%, #1d2122); }
.title h1 { color: #e8e9ea; margin-left: 6px; flex: 1; }
.winbtns { display: flex; }
.winbtns button { width: 45px; height: 22px; display: grid; place-items: center; }
.menu { display: flex; gap: 18px; padding-left: 11px; height: 22px; align-items: center; color: #b5b7b8; white-space: nowrap; }
.toolbar { display: flex; justify-content: space-between; padding: 6px 4px 0 9px; }
.tools { display: flex; gap: 5px; padding-left: 10px; }
.zones { display: flex; gap: 5px; }

.grp { display: flex; height: 25px; border: 1px solid #5b5d5f; border-radius: 3px; background: #434547; overflow: hidden; color: #d4d5d6; flex: none; }
.grp.dark { background: #191b1c; }
.grp.soft { border-color: #4a4c4e; background: #3e4043; }
.b { width: 25px; height: 100%; display: flex; align-items: center; justify-content: center; }
.b:first-child, .b:last-child { width: 24px; }
.b:only-child { width: 23px; }
.b.on { background: #d3d4d4; color: #1f2122; }
.b.mid { background: #434547; }
.b.drk { background: #1b1d1e; }
.ltr .b { font: bold 15px/20px Roboto, sans-serif; }
.handle { width: 13px; display: flex; align-items: center; justify-content: center; margin-right: -1px; }
.handle + .b { width: 25px; }
.grp .slim { width: 18px; }
.grp .slim2 { width: 19px; }
.slim2.mid { border-left: 1px solid #5b5d5f; }
.apart { margin-left: 5px; }
.qletter { font: bold 15px/20px Roboto, sans-serif; }
.sel { display: flex; align-items: center; padding: 0 5px 0 6px; gap: 4px; }
.sel select { appearance: none; flex: 1; min-width: 0; outline: none; font-size: 12px; text-overflow: clip; }
.sel select option { background: #191b1c; }
.w110 { width: 111px; } .w136 { width: 136px; } .w124 { width: 124px; } .w111 { width: 111px; } .w99 { width: 99px; }

.status { display: flex; justify-content: center; gap: 6px; margin-top: 10px; padding-left: 11px; }
.status div { display: flex; gap: 18px; background: #34373a; height: 19px; align-items: center; padding: 0 8px; white-space: nowrap; }
.status dt { font-size: 10px; }
.status dd { font-weight: 600; font-size: 11px; }

.info { display: flex; background: #18191b; height: 40px; padding: 4px 0 2px 4px; border-bottom: 1px solid #0a0a0b; }
.icol { width: 98px; border-right: 1px solid #8b8d8e; display: flex; flex-direction: column; align-items: center; font-size: 10px; line-height: 15px; color: #a3a5a6; }
.icol:nth-child(5) { width: 100px; }
.icol b { color: #fff; font: bold 14px/22px Roboto, sans-serif; }
.pos { display: flex; justify-content: flex-end; }
.pos i { width: 17px; }
.pos i:last-child { width: 12px; text-align: right; }
.pos.small { align-self: flex-end; padding-right: 4px; }
.pos.small i:nth-child(3) { width: 20px; }
.pos.big { font: 15px/25px Roboto, sans-serif; padding-right: 7px; color: #d4d5d6; }
.pos.big i { width: 21px; }
.pos.big i:nth-child(3) { width: 27px; }
.pos.big i:last-child { width: 10px; }
.overview { height: 29px; background: #25282b; border: solid #0a0b0b; border-width: 1px 1px 0; display: flex; }
.view { width: 25px; background: #a5a6a8; border: 1px solid #d9d9da; }
.rest { width: 22px; background: #535557; }

.main { flex: 1; display: flex; gap: 4px; padding: 5px 4px 4px; }
.panel { border: 2px solid #5c5e60; border-radius: 7px; background: #24272a; }

.channel { width: 80px; display: flex; flex-direction: column; padding: 1px 7px 7px; }
.channel h2 { font-weight: 700; font-size: 11px; text-align: center; color: #e8e9ea; line-height: 18px; white-space: nowrap; }
.chrow { display: flex; height: 19px; margin: 0 1px; border: 1px solid #85878a; border-radius: 2px; background: #66686a; color: #e6e7e8; }
.chrow.first { margin-top: 10px; }
.mt18 { margin-top: 18px; } .mt22 { margin-top: 22px; }
.chrow .name { flex: 1; font-weight: 600; line-height: 17px; }
.sq { width: 19px; border-left: 1px solid #7d7f81; display: grid; place-items: center; }
.sq.line { background: #1e2021; }
.eq { height: 59px; margin-top: 9px; background: linear-gradient(#07080a 29px, #4f9fd3 29px, #4f9fd3 31px, #07080a 31px); }
.slot { margin: 8px 2px 0; border: 1px solid #141516; border-radius: 2px; }
.s1 { height: 17px; } .s2 { height: 35px; }
.split { margin-top: auto; height: 2px; background: linear-gradient(90deg, #6b6d6e 18px, transparent 18px, transparent 20px, #ddd 20px, #ddd 24px, transparent 24px, transparent 26px, #ddd 26px, #ddd 30px, transparent 30px, transparent 32px, #ddd 32px, #ddd 36px, transparent 36px, transparent 38px, #ddd 38px, #ddd 42px, transparent 42px, transparent 44px, #6b6d6e 44px); }
.four { display: grid; grid-template-columns: 1fr 1fr; grid-auto-rows: 18px; gap: 1px; margin-top: 4px; padding: 1px; background: #111213; color: #adafb0; font: bold 13px/18px Roboto, sans-serif; }
.four button { background: #2c2f31; display: grid; place-items: center; }
.red { background: #e33b3b !important; color: #1d0d0d; }
.pan { height: 32px; margin: 6px 1px 0; background: #1b1d1e; border-radius: 3px; display: flex; flex-direction: column; align-items: center; font: bold 10px/12px Roboto, sans-serif; color: #e6e7e8; border: 1px solid #17181a; }
.pan i { width: 4px; height: 18px; background: #eee; }
.fader { display: flex; gap: 4px; height: 260px; margin: 9px 1px 0; }
.fcol { width: 28px; height: 260px; background: #1c1e1f; border-radius: 3px; display: grid; flex: none; }
.fcol > * { grid-area: 1 / 1; }
.fcol input { appearance: none; writing-mode: vertical-lr; direction: rtl; width: 28px; height: 260px; }
.fcol input::-webkit-slider-thumb { appearance: none; width: 18px; height: 46px; border-radius: 1px; background: linear-gradient(#848484 5px, #bdbdbd 5px, #b4b4b4 11px, #9a9a9a 12px, #a8a8a8 16px, #8c8c8c 17px, #c0c0c0 19px, #c0c0c0 22px, #222 22px, #222 23px, #d0d0d0 23px, #dedede 29px, #b0b0b0 30px, #e0e0e0 31px, #dcdcdc 41px, #7d7d7d 41px); }
.meter { background: #1c1e1f; border-radius: 3px; display: block; }
.meter text { font: 9px Roboto, sans-serif; fill: #85878a; }
.vals { display: flex; margin-top: 7px; height: 18px; border: 1px solid #111213; background: #26292b; line-height: 16px; font-size: 11px; }
.vals span { flex: 1; text-align: center; } .vals .lit { background: #3f4143; }
.vals + .four { margin-top: 5px; }
.trk { display: flex; justify-content: space-between; margin-top: 7px; height: 16px; padding-right: 11px; }
.tico { width: 16px; height: 16px; background: #55575a; display: grid; place-items: center; border-radius: 2px; border: 1px solid #6b6d6f; }
.tname { height: 34px; margin-top: 3px; background: #727476; color: #eceded; font-size: 11px; line-height: 14px; padding: 1px 0 0 4px; white-space: nowrap; overflow: hidden; }

.center { flex: 1; min-width: 0; display: flex; flex-direction: column; }
.project { flex: 1; display: flex; padding: 4px 4px 4px 0; min-height: 300px; }
.tracks { width: 525px; display: flex; flex-direction: column; flex: none; }
.thead { display: flex; padding: 0 3px 0 4px; height: 24px; }
.h19 { height: 19px; }
.count { margin-left: auto; width: 62px; height: 19px; background: #2f3235; padding-left: 4px; line-height: 19px; font-size: 11px; }
.find { margin-left: 11px; }
.tlist { display: flex; margin: 0 2px 0 5px; border-top: 1px solid #7b7d7e; border-bottom: 1px solid #000; }
.rows { flex: 1; }
.row { display: flex; color: #111; }
.io { height: 20px; border-bottom: 1px solid #000; }
.drum { height: 45px; }
.hd { width: 40px; background: #6f7173; padding: 3px 4px 0; display: flex; justify-content: space-between; flex: none; }
.hd span { line-height: 18px; }
.bd { flex: 1; }
.io .bd { padding-left: 11px; color: #c9cacb; font-size: 11px; line-height: 20px; }
.drum .bd { background: #9c9e9f; padding: 2px 0 0 5px; }
.l1, .l2 { display: flex; height: 19px; align-items: center; }
.l1 span { margin-left: 9px; font: 14px/18px Roboto, "Open Sans", sans-serif; }
.l2 { margin: 2px 0 0 56px; gap: 2px; }
.tg { display: flex; height: 19px; border: 1px solid #4d4f51; border-radius: 2px; }
.tg button { width: 24px; display: grid; place-items: center; font: bold 13px/17px Roboto, sans-serif; }
.l2 .tg button { width: 23px; }
.blk { background: #1a1b1c; color: #e6e7e8; }
.tmeter { width: 10px; background: #060707; display: flex; align-items: flex-end; gap: 1px; padding: 0 1px 1px 2px; }
.tmeter i { width: 3px; height: 24px; background: linear-gradient(#5fd6c0, #38b6df); }
.tmeter i + i { height: 23px; }
.tfoot { margin-top: auto; display: flex; align-items: center; padding: 0 7px 0 12px; gap: 10px; color: #85878a; }
.tfoot span { margin-right: auto; color: #b5b7b8; font-size: 11px; }
.vsplit { width: 2px; background: #66686a; display: flex; align-items: center; }
.vsplit i { width: 2px; height: 26px; background: repeating-linear-gradient(#eee 0 4px, #24272a 4px 6px); }
.timeline { flex: 1; min-width: 0; display: flex; flex-direction: column; margin-right: 3px; }
.arr { flex: 1; height: 0; min-height: 0; width: 100%; display: block; }
.arr text { font: bold 14px Roboto, sans-serif; fill: #f0f0f0; }
.hscroll { height: 12px; background: #3f4144; display: flex; align-items: center; gap: 6px; padding: 0 0 0 3px; color: #eee; }
.thumb { width: 28px; height: 8px; border-radius: 3px; background: #f1f1f2; }
.grow { flex: 1; }
.hscroll input { width: 48px; height: 10px; margin: 0; }
.hscroll input, .vs input { appearance: none; background: linear-gradient(#808284, #808284) center / 100% 2px no-repeat; }
.hscroll input::-webkit-slider-thumb, .vs input::-webkit-slider-thumb { appearance: none; width: 8px; height: 8px; border-radius: 50%; background: #fff; }
.vside { width: 12px; display: flex; flex-direction: column; gap: 3px; color: #eee; padding-bottom: 12px; }
.vside button, .vs { background: #3a3c3f; border-radius: 2px; display: flex; align-items: center; justify-content: center; }
.v21 { height: 22px; border: 1px solid #5b5d5f; } .v12 { height: 12px; } .v48 { height: 48px; } .v84 { height: 84px; flex-direction: column; padding: 2px 0; }
.vs input { writing-mode: vertical-lr; direction: rtl; width: 10px; height: 40px; background: linear-gradient(#808284, #808284) center / 2px 100% no-repeat; }
.v84 input { height: 56px; margin: 2px 0; }
.vbar { flex: 1; background: #3f4144; display: flex; flex-direction: column; justify-content: space-between; align-items: center; color: #77797b; border-radius: 2px; }

.lower { margin-top: 4px; border: 2px solid #f6f7f7; border-radius: 7px; background: #24272a; padding: 7px 7px 42px; }
.lbar { display: flex; gap: 5px; padding-bottom: 7px; border-bottom: 1px solid #505254; }
.psel { width: 157px; font-size: 9px; line-height: 12px; }
.psel span { flex: 1; padding-left: 4px; white-space: nowrap; }
.modes { display: flex; gap: 3px; margin: 0 21px 0 9px; }
.tb { width: 70px; height: 25px; border: 1px solid #505254; border-radius: 3px; background: #3e4043; }
.w85 { width: 85px; }
.sel-on { background: #d3d4d4; color: #1f2122; border-color: #d3d4d4; }
.ml { margin-left: 13px; }
.fxb { display: flex; margin-right: 1px; }
.fxb .tb { border-radius: 3px 0 0 3px; }
.pw { width: 25px; background: #d3d4d4; color: #1f2122; border-radius: 0 3px 3px 0; display: grid; place-items: center; }
.fxl { font: bold 15px/20px "Open Sans", sans-serif; }
.push { margin-left: auto; }

.kit { display: flex; padding: 37px 0 0 4px; }
.padzone { width: 274px; flex: none; }
.banks { display: flex; margin-top: -1px; }
.bank { width: 33px; height: 33px; padding: 3px 2px 2px 0; border: 1px solid transparent; border-left: 0; }
.bank i { display: block; width: 27px; height: 27px; background: linear-gradient(90deg, transparent 6px, #2a2d2f 6px) 0 0 / 7px 7px, linear-gradient(transparent 6px, #2a2d2f 6px) 0 0 / 7px 7px, #191b1c; }
.bank.cur { border: 1px solid #c9cacb; padding-left: 2px; margin-left: -3px; margin-right: 3px; }
.bank.cur i { background: linear-gradient(#fff, #fff) 0 21px / 6px 6px no-repeat, linear-gradient(90deg, transparent 6px, #2a2d2f 6px) 0 0 / 7px 7px, linear-gradient(transparent 6px, #2a2d2f 6px) 0 0 / 7px 7px, #191b1c; }
.pads { display: grid; grid-template-columns: repeat(4, 58px); grid-auto-rows: 58px; gap: 9px 8px; padding: 6px 0 0 1px; }
.pad { background: #3a3c3e; border-radius: 3px; display: flex; flex-direction: column; justify-content: space-between; padding: 5px 4px 2px; }
.pad.cur { outline: 2px solid #c2a02c; outline-offset: 1px; border-radius: 4px; }
.ph { display: flex; gap: 2px; }
.ph button { width: 11px; height: 11px; background: #606264; border-radius: 2px; font: bold 10px/11px Roboto, sans-serif; color: #d9dadb; }
.ph span { flex: 1; text-align: center; font-weight: 600; font-size: 9px; line-height: 12px; color: #a3a5a6; padding-left: 2px; }
.pad em { text-align: center; font-size: 9px; line-height: 7px; color: #151617; }
.pad em.lt { color: #a3a5a6; }

.inst { width: 932px; height: 301px; background: #1a1b1e; border-radius: 3px; display: flex; flex: none; }
.layers { width: 202px; padding: 4px 5px; display: flex; flex-direction: column; gap: 5px; flex: none; }
.layer { display: flex; align-items: center; gap: 8px; height: 20px; }
.lslot { width: 159px; height: 20px; border: 1px solid #36383a; border-radius: 2px; background: #1f2123; padding: 2px; }
.lslot button { width: 18px; height: 14px; background: #3f4143; color: #111; display: grid; place-items: center; border-radius: 2px; }
.lslot.cur { background: #b9babb; border-color: #8d8e8f; }
.lslot.cur button { background: #a3a4a5; color: #6d6e70; }
.stage { flex: 1; display: flex; flex-direction: column; }
.srow { display: flex; height: 127px; }
.drop { width: 421px; display: flex; flex-direction: column; align-items: center; padding: 17px 0 0 5px; }
.drop svg { margin-left: 10px; }
.drop p { font-weight: 600; font-size: 11px; margin-top: 5px; color: #bcbebf; }
.padctl { flex: 1; color: #434547; }
.padctl h3 { text-align: center; padding: 6px 16px 0 0; font-weight: 600; font-size: 11px; }
.knobs { display: flex; margin-top: 2px; }
.rampb { width: 25px; height: 25px; margin: 15px 4px 0 0; border: 1px solid #252729; border-radius: 3px; display: grid; place-items: center; }
.knob { width: 60px; display: flex; flex-direction: column; align-items: center; font-size: 11px; white-space: nowrap; }
.knob + .send { margin-left: 2px; }
.vm { width: 4px; height: 80px; margin: -8px 2px 0 5px; background: #151618; }
.cats { width: 525px; height: 77px; display: flex; gap: 6px; padding: 8px 9px; background: #26292b; border-radius: 3px; }
.cat { width: 58px; height: 60px; background: #2f3133; border-radius: 3px; color: #d9dadb; display: flex; flex-direction: column; align-items: center; padding-top: 3px; flex: none; white-space: nowrap; }
.cat span { font-size: 10px; font-weight: 600; line-height: 12px; color: #a9abac; }
.cat.cur { background: #56585a; }
.cats svg, .subs svg { display: block; flex: none; }
.subs { display: flex; gap: 6px; padding: 16px 0 0 139px; }
.subs .cat { background: #222426; }

.ltabs { display: flex; height: 23px; margin: -2px 0 -1px; font-weight: 700; color: #d4d5d6; padding-left: 2px; z-index: 1; }
.ltabs button { white-space: nowrap; padding-top: 2px; }
.ltabs .x { width: 17px; display: grid; place-items: center; }
.t0 { width: 109px; } .t1 { width: 82px; } .t2 { width: 126px; } .t3 { width: 137px; } .t4 { width: 95px; } .t5 { width: 114px; }
.ltabs .cur { border: 2px solid #f6f7f7; border-top-color: #24272a; background: #24272a; color: #fff; border-radius: 0 0 3px 3px; padding-top: 0; }

.right { width: 230px; display: flex; flex-direction: column; flex: none; }
.rtabs { display: flex; height: 24px; margin-bottom: -2px; font-weight: 700; color: #d4d5d6; z-index: 1; }
.rtabs button { width: 69px; }
.rtabs .cur { width: 82px; border: 2px solid #5c5e60; border-bottom: 0; border-radius: 3px 3px 0 0; background: #24272a; color: #f2f2f2; }
.rpanel { flex: 1; padding: 7px 7px 0; }
.sline { display: flex; gap: 3px; }
.sbox { flex: 1; height: 20px; border: 1px solid #6b6d6f; border-radius: 3px; background: #1a1c1d; display: flex; align-items: center; padding-left: 3px; gap: 4px; color: #c9cacb; }
.sbox input { min-width: 0; flex: 1; outline: none; font-style: italic; font-size: 11px; line-height: 16px; }
.sbox input::placeholder { color: #9b9d9e; opacity: 1; }
.lbtn { width: 25px; height: 20px; background: #505254; border: 1px solid #77797b; border-radius: 3px; display: grid; place-items: center; }
.nline { display: flex; gap: 5px; margin-top: 5px; padding-bottom: 5px; border-bottom: 1px solid #808284; }
.nline button { height: 20px; display: grid; place-items: center; }
.nline .bk { width: 20px; border: 1px solid #303335; color: #5c5e60; border-radius: 2px; }
.tiles { display: grid; grid-template-columns: repeat(2, 108px); justify-content: center; padding: 37px 4px 0 0; row-gap: 24px; }
.tile { display: flex; flex-direction: column; align-items: center; height: 100px; white-space: nowrap; }
.tpic { width: 70px; height: 70px; border-radius: 3px; background: #a6a7a8; color: #25282a; flex: none; }
.fx { font: bold 40px/68px "Open Sans", sans-serif; }
.tl { margin-top: 12px; font-size: 11px; color: #e6e7e8; }

.transport { height: 40px; background: #25282b; display: flex; justify-content: space-between; align-items: center; padding: 0 4px; }
.cl { display: flex; align-items: center; gap: 5px; }
.mid-cl { padding-left: 9px; }
.dots { width: 2px; height: 12px; margin: 0 1px 0 -2px; background: repeating-linear-gradient(#c9cacb 0 2px, transparent 2px 5px); }
.gap { width: 0; }
.grp .w21 { width: 21px; } .grp .w23 { width: 23px; } .grp .w36 { width: 36px; }
.thin { font: 15px/20px Roboto, sans-serif; }
.bl { border-left: 1px solid #5b5d5f; } .br { border-right: 1px solid #5b5d5f; }
.play { display: flex; height: 32px; border: 2px solid #b4b5b6; border-radius: 3px; background: #66686a; color: #eceded; }
.play button { display: grid; place-items: center; }
.p1 { width: 39px; } .p2 { width: 47px; } .p3 { width: 50px; }
.act { background: #a6a8ab; color: #17181a; }
.tempo { align-items: center; font: 13px/24px Roboto, sans-serif; }
.tv { width: 66px; text-align: center; }
.ts { width: 50px; height: 100%; margin-left: 2px; border-left: 1px solid #5b5d5f; text-align: center; }
.tempo .tap { width: 50px; }
.out { width: 89px; }
.o1 { width: 25px; border-right: 1px solid #3a3c3e; }
.o2 { flex: 1; display: flex; align-items: flex-end; justify-content: flex-end; gap: 1px; padding: 0 12px 2px 0; }
.o2 i { width: 7px; height: 12px; background: #2adbd0; }
.o2 i + i { height: 11px; }

/* Kana runs wide, so Japanese labels are set a size below their Latin neighbours. */
.title .k10, .status .k10 { font-size: 10px; }
.menu .k11, .ltabs .k11, .rtabs .k11, .sel .k11 { font-size: 11px; }
.sel .k13 { font-size: 13px; }
</style>
